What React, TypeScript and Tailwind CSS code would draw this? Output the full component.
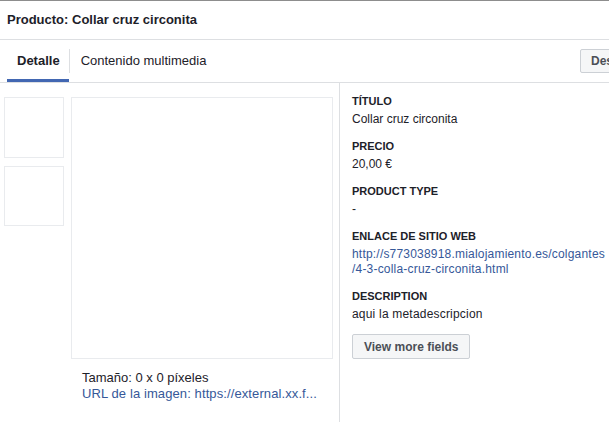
import type { ReactNode } from "react";

type FieldProps = {
  label: string;
  children: ReactNode;
};

function Field({ label, children }: FieldProps) {
  return (
    <div className="mb-[11px]">
      <p className="text-[11px] font-bold leading-[16px] text-[#1d2129]">{label}</p>
      <div className="mt-[3px] text-[12px] leading-[15px] text-[#1d2129]">{children}</div>
    </div>
  );
}

export default function App() {
  return (
    <div
      className="h-[422px] w-[609px] overflow-hidden border-t border-[#8d8d8d] bg-white text-[#1d2129]"
      style={{ fontFamily: '"Liberation Sans", Arial, sans-serif' }}
    >
      <header className="flex h-[39px] items-center border-b border-[#dddfe2] px-[7px]">
        <h1 className="text-[13px] font-bold">Producto: Collar cruz circonita</h1>
      </header>

      <div className="flex h-[43px] items-stretch border-b border-[#dddfe2] pl-[7px]">
        <div className="flex items-center border-b-[3px] border-[#4267b2] pl-[10px] pr-[9px] pt-[3px]">
          <span className="text-[13px] font-bold">Detalle</span>
        </div>
        <div className="my-[9px] w-px bg-[#dddfe2]" />
        <div className="flex items-center px-[11px]">
          <span className="text-[13px]">Contenido multimedia</span>
        </div>
        <div className="flex-1" />
        <div className="flex w-[29px] shrink-0 items-center">
          <button className="h-[24px] shrink-0 whitespace-nowrap rounded-[2px] border border-[#ccd0d5] bg-[#f5f6f7] px-[10px] text-[12px] font-bold text-[#4b4f56]">
            Descargar
          </button>
        </div>
      </div>

      <div className="flex">
        <div className="flex w-[340px] shrink-0 border-r border-[#dddfe2] pb-[30px]">
          <div className="flex flex-col gap-[8px] pl-[4px] pt-[14px]">
            <div className="h-[61px] w-[60px] border border-[#e9ebee]" />
            <div className="h-[60px] w-[60px] border border-[#e9ebee]" />
          </div>
          <div className="pl-[7px] pt-[14px]">
            <div className="h-[262px] w-[262px] border border-[#e9ebee]" />
            <div className="pl-[11px] pt-[11px] text-[13px] leading-[16px]">
              <p>Tamaño: 0 x 0 píxeles</p>
              <p className="tracking-[0.1px] text-[#365899]">URL de la imagen: https://external.xx.f...</p>
            </div>
          </div>
        </div>

        <div className="min-w-0 flex-1 pl-[12px] pt-[10px]">
          <Field label="TÍTULO">Collar cruz circonita</Field>
          <Field label="PRECIO">20,00 €</Field>
          <Field label="PRODUCT TYPE">-</Field>
          <Field label="ENLACE DE SITIO WEB">
            <p className="whitespace-nowrap tracking-[0.2px] text-[#365899]">
              http://s773038918.mialojamiento.es/colgantes
            </p>
            <p className="tracking-[0.2px] text-[#365899]">/4-3-colla-cruz-circonita.html</p>
          </Field>
          <Field label="DESCRIPTION">
            <span className="tracking-[0.2px]">aqui la metadescripcion</span>
          </Field>
          <button className="mt-[1px] h-[25px] rounded-[2px] border border-[#ccd0d5] bg-[#f5f6f7] px-[11px] text-[12px] font-bold text-[#4b4f56]">
            View more fields
          </button>
        </div>
      </div>
    </div>
  );
}
